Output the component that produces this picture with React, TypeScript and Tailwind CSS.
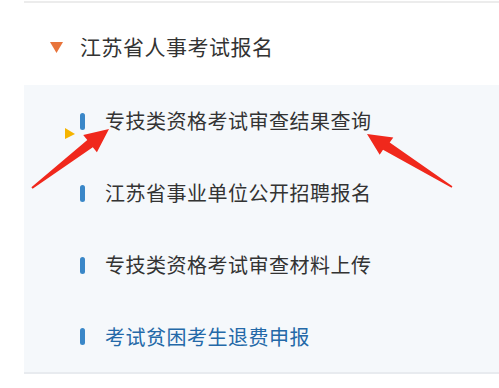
import React from "react";

const items = [
  { label: "专技类资格考试审查结果查询", active: true },
  { label: "江苏省事业单位公开招聘报名" },
  { label: "专技类资格考试审查材料上传" },
  { label: "考试贫困考生退费申报", link: true },
];

export default function App() {
  return (
    <div className="relative w-[499px] h-[388px] overflow-hidden bg-white font-['Noto_Sans_CJK_SC','Microsoft_YaHei',sans-serif]">
      <div className="ml-6 mt-px border-t-2 border-[#ececec]">
        {/* section title */}
        <div className="h-[82px] pt-[6px] pl-[26px] flex items-center gap-[17px]">
          <svg width="13" height="11" viewBox="0 0 13 11">
            <polygon points="0,0 13,0 6.5,11" fill="#e8743b" />
          </svg>
          <span className="text-[21px] tracking-[0.5px] text-[#333]">江苏省人事考试报名</span>
        </div>

        <ul className="bg-[#f5f8fb] border-b-2 border-[#e8ebef]">
          {items.map((it) => (
            <li
              key={it.label}
              className="relative h-[72px] last:h-[71px] pl-[56px] flex items-center gap-[20px]"
            >
              {it.active && (
                <svg
                  className="absolute left-[41px] top-[43px]"
                  width="10"
                  height="11"
                  viewBox="0 0 10 11"
                >
                  <polygon points="0,0 10,6 0,11" fill="#f5b400" />
                </svg>
              )}
              <span className="block shrink-0 w-[5px] h-[17px] rounded-full bg-[#3a87c8]" />
              <span
                className={
                  it.link
                    ? "text-[20px] tracking-[0.5px] text-[#2469a8]"
                    : "text-[20px] tracking-[0.5px] text-[#333]"
                }
              >
                {it.label}
              </span>
            </li>
          ))}
        </ul>
      </div>

      {/* red annotation arrows */}
      <svg className="absolute inset-0 pointer-events-none" width="499" height="388" viewBox="0 0 499 388">
        <polygon
          points="109,129 96.9,152.2 92.8,147.2 32.6,188.8 31.4,187.2 87.3,140.1 83.2,135.1"
          fill="#f0281c"
        />
        <polygon
          points="367,134 393.3,137.4 389.7,142.6 452.4,186.3 451.6,187.7 383,149.7 379.7,154.7"
          fill="#f0281c"
        />
      </svg>
    </div>
  );
}
